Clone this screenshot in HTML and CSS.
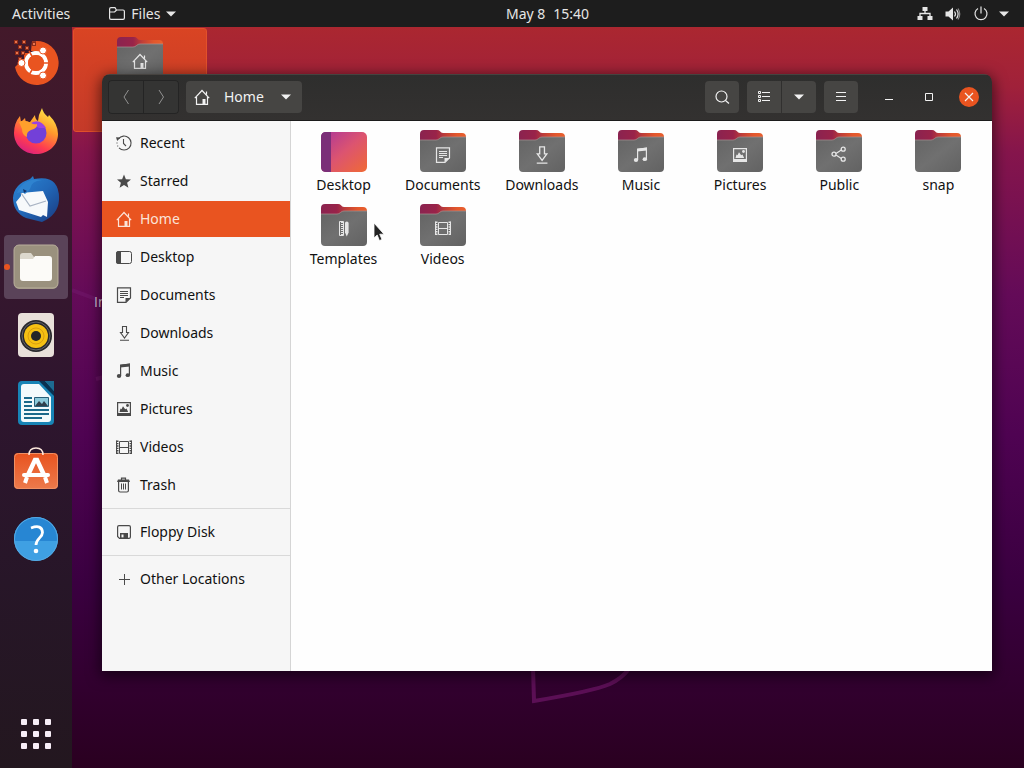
FILE: index.html
```html
<!DOCTYPE html>
<html lang="en">
  <head>
    <meta charset="UTF-8" />
    <meta name="viewport" content="width=device-width, initial-scale=1.0" />
    <title>Home</title>
    <link rel="stylesheet" href="styles.css">
  </head>
  <body>
    <svg class="sprite" width="0" height="0" aria-hidden="true">
      <defs>
        <linearGradient id="folder-back" x1="0" x2="1" y1="0" y2="0">
          <stop offset="0" stop-color="#8a2350" />
          <stop offset="0.35" stop-color="#992349" />
          <stop offset="0.55" stop-color="#c03f38" />
          <stop offset="0.8" stop-color="#e3572c" />
          <stop offset="1" stop-color="#e8602e" />
        </linearGradient>
        <linearGradient id="folder-front" x1="0" x2="1" y1="0" y2="1">
          <stop offset="0" stop-color="#646464" />
          <stop offset="0.5" stop-color="#707070" />
          <stop offset="1" stop-color="#626262" />
        </linearGradient>
        <linearGradient id="desk" x1="0" x2="1" y1="0" y2="1">
          <stop offset="0.1" stop-color="#b53c92" />
          <stop offset="0.5" stop-color="#dc5470" />
          <stop offset="1" stop-color="#f06a35" />
        </linearGradient>
        <linearGradient id="fox" x1="0.8" x2="0.3" y1="0" y2="1">
          <stop offset="0" stop-color="#fff04a" />
          <stop offset="0.4" stop-color="#ff9a2c" />
          <stop offset="0.75" stop-color="#ff3c50" />
          <stop offset="1" stop-color="#d82080" />
        </linearGradient>
        <linearGradient id="bird" x1="0" x2="1" y1="0" y2="1">
          <stop offset="0" stop-color="#2b86d4" />
          <stop offset="0.5" stop-color="#2268b8" />
          <stop offset="1" stop-color="#193a80" />
        </linearGradient>
        <linearGradient id="bag" x1="0" x2="0" y1="0" y2="1">
          <stop offset="0" stop-color="#e8531f" />
          <stop offset="1" stop-color="#ec7a4c" />
        </linearGradient>
      </defs>
      <symbol id="folder" viewBox="0 0 46 44">
        <path fill="url(#folder-back)" d="M0 5q0-4 4-4h13q2 0 3 1.200q1 1.800 3 1.800h19q4 0 4 4v12H0z" />
        <path fill="url(#folder-front)" d="M0 11h16q2 0 3.500-1.500t3.500-1.500h23v31q0 4-4 4H4q-4 0-4-4z" />
        <path fill="none" stroke="#a79492" stroke-width="0.700" d="M0 11h16q2 0 3.500-1.500t3.500-1.500h23" />
      </symbol>
      <symbol id="desktop-folder" viewBox="0 0 46 44">
        <rect y="3" width="46" height="40" rx="5" fill="url(#desk)" />
        <path fill="#7b2f78" d="M10 3H5Q0 3 0 8v30q0 5 5 5h5z" />
      </symbol>
      <symbol id="house" viewBox="0 0 16 16">
        <path fill="none" stroke="currentColor" stroke-width="1.200" d="M.8 9.200L8 1.500l7.200 7.700M2.500 8v7.400h11V8M12.500 5.500v-3" />
        <path fill="currentColor" d="M8.500 10h3v5.500h-3z" />
      </symbol>
      <symbol id="recent" viewBox="0 0 16 16">
        <path fill="none" stroke="currentColor" stroke-width="1.100" d="M2.500 3.800A7 7 0 1 1 3 12.900M7.500 4v4.500L10 11" />
        <path fill="currentColor" d="M0 2.200l4.500.3L1.200 6z" />
        <path fill="currentColor" d="M.5 7.500h1v1h-1zM1.200 10.500h1v1h-1z" />
      </symbol>
      <symbol id="star" viewBox="0 0 16 16">
        <path fill="currentColor" d="M8 1.500l1.900 4.700 5.100.4-3.900 3.200 1.300 5L8 12l-4.400 2.800 1.300-5L1 6.600l5.100-.4z" />
      </symbol>
      <symbol id="desktop" viewBox="0 0 16 16">
        <rect x="0.5" y="2.500" width="15" height="12" rx="2" fill="none" stroke="currentColor" />
        <path fill="currentColor" d="M5 2H2.500Q0 2 0 4.500v8Q0 15 2.500 15H5z" />
      </symbol>
      <symbol id="document" viewBox="0 0 16 16">
        <path fill="none" stroke="currentColor" stroke-width="1.200" d="M1.500.8h13v10l-4.500 4.500H1.500z" />
        <path fill="currentColor" d="M9.500 15.500V11H15z" />
        <path fill="none" stroke="currentColor" d="M4 4.500h8M4 6.500h8M4 8.500h8M4 10.500h4" />
      </symbol>
      <symbol id="download" viewBox="0 0 16 16">
        <path fill="none" stroke="currentColor" stroke-width="1.100" d="M6.500 1.500h4v6h2L8.500 13l-4-5.500h2zM4 15.300h9" />
      </symbol>
      <symbol id="music" viewBox="0 0 16 16">
        <path fill="none" stroke="currentColor" stroke-width="1.200" d="M4.600 13V2.200l8.800-1V12" />
        <path fill="currentColor" d="M4 1.800L14 .6v3L4 4.600z" />
        <ellipse cx="3" cy="13" rx="2.200" ry="1.900" fill="currentColor" />
        <ellipse cx="11.800" cy="12.200" rx="2.200" ry="1.900" fill="currentColor" />
      </symbol>
      <symbol id="picture" viewBox="0 0 16 16">
        <path fill="none" stroke="currentColor" stroke-width="1.200" d="M1.600 1.600h12.800v12.800H1.600z" />
        <path fill="currentColor" d="M1 12h14v3H1zM3.500 11l1-3.500 1 .8 1.500-3 2.200 3 1.300-.8 1.700 3.500z" />
        <circle cx="11.500" cy="4.500" r="1.400" fill="currentColor" />
      </symbol>
      <symbol id="film" viewBox="0 0 16 16">
        <path fill="none" stroke="currentColor" d="M3.500 2.500h9v12h-9zM3.500 8.500h9" />
        <path fill="none" stroke="currentColor" stroke-width="2" stroke-dasharray="1.400 1" d="M1.500 1.500V15M14.500 1.500V15" />
        <path fill="none" stroke="currentColor" d="M.5 1.500V15M15.500 1.500V15" />
      </symbol>
      <symbol id="trash" viewBox="0 0 16 16">
        <path fill="none" stroke="currentColor" stroke-width="1.200" d="M5.500 3V1.200h4V3M2.600 5v8.500q0 1.500 1.500 1.500h6.800q1.500 0 1.500-1.500V5" />
        <path fill="currentColor" d="M2 2.500h11l1 2.500H1z" />
        <path fill="none" stroke="currentColor" d="M5.500 6.500v6M7.500 6.500v6M9.500 6.500v6" />
      </symbol>
      <symbol id="floppy" viewBox="0 0 16 16">
        <path fill="none" stroke="currentColor" stroke-width="1.200" d="M3 1.600h10q1.400 0 1.400 1.400v10q0 1.400-1.400 1.400H3.500L1.600 12.500V3Q1.600 1.600 3 1.600z" />
        <path fill="currentColor" fill-rule="evenodd" d="M4 14.500V9h8v5.500zM5.500 10.500v3h2v-3z" />
      </symbol>
      <symbol id="plus" viewBox="0 0 16 16">
        <path fill="none" stroke="currentColor" d="M8.500 3v11M3 8.500h11" />
      </symbol>
      <symbol id="share" viewBox="0 0 16 16">
        <path fill="none" stroke="currentColor" stroke-width="1.200" d="M10.300 4L5 7.500M5 9l5.300 3.500" />
        <g fill="none" stroke="currentColor" stroke-width="1.300">
          <circle cx="3" cy="8.200" r="2" />
          <circle cx="12.200" cy="3.200" r="2" />
          <circle cx="12.200" cy="13.200" r="2" />
        </g>
      </symbol>
      <symbol id="template" viewBox="0 0 16 16">
        <path fill="none" stroke="currentColor" d="M3.500.5h4v14h-4z" />
        <path fill="none" stroke="currentColor" stroke-width="2" stroke-dasharray="1 1" d="M6 1v13" />
        <path fill="currentColor" d="M9 2q0-1.500 1.800-1.500T12.600 2v9.500l-1.800 4L9 11.500z" />
      </symbol>
      <symbol id="arrow" viewBox="0 0 10 6">
        <path fill="currentColor" d="M0 .5h10L5 5.500z" />
      </symbol>
    </svg>

    <header class="topbar">
      <div class="topbar-left">
        <button class="bar-button">Activities</button>
        <button class="bar-button app-menu">
          <svg class="icon" viewBox="0 0 16 16" aria-hidden="true">
            <path fill="none" stroke="currentColor" stroke-width="1.200" d="M.6 5V3q0-1.400 1.400-1.400h4L7.400 4H14q1.400 0 1.400 1.400V12q0 1.400-1.400 1.400H2Q.6 13.400.6 12zM.6 6h5l2-2" />
          </svg>
          Files
          <svg class="arrow" aria-hidden="true"><use href="#arrow" /></svg>
        </button>
      </div>
      <button class="bar-button clock"><span>May 8</span><span>15:40</span></button>
      <div class="topbar-right">
        <button class="bar-button status" aria-label="System">
          <svg class="icon" viewBox="0 0 16 16" aria-hidden="true">
            <path fill="currentColor" d="M5.500 1h5v4h-5zM.5 10h5v4h-5zM10.500 10h5v4h-5z" />
            <path fill="none" stroke="currentColor" stroke-width="1.300" d="M8 5v3M3 10V7.500h10V10" />
          </svg>
          <svg class="icon" viewBox="0 0 16 16" aria-hidden="true">
            <path fill="currentColor" d="M.5 5.500h3L8 1.500v13l-4.500-4h-3z" />
            <path fill="none" stroke="currentColor" stroke-width="1.200" d="M9.500 5.500q2 2.500 0 5M11.500 3.500q3.200 4.500 0 9" />
            <path fill="none" stroke="#8a8a8a" stroke-width="1.200" d="M13 2.500q3.500 5.500 0 11" />
          </svg>
          <svg class="icon" viewBox="0 0 16 16" aria-hidden="true">
            <path fill="none" stroke="currentColor" stroke-width="1.200" d="M5 2.500a6 6 0 1 0 6 0M8 .5v7" />
          </svg>
          <svg class="arrow" aria-hidden="true"><use href="#arrow" /></svg>
        </button>
      </div>
    </header>

    <div class="screen">
      <nav class="dock" aria-label="Dock">
        <button class="dock-item" aria-label="Install Ubuntu">
          <svg viewBox="0 0 48 48" aria-hidden="true">
            <path fill="#e95420" d="M24 2A22 22 0 1 1 3 28l3-3v-5h8v-5h8V9h2z" />
            <path fill="#e95420" d="M20 2.500h5V12h-6zM12 14h7v8h-7z" />
            <path fill="#8e2c18" d="M2 1h4v4H2zM10 1h4v4h-4zM20 3h4v4h-4zM6 6h4v4H6zM13 7h4v4h-4zM3 12h4v4H3zM9 12h4v4H9zM6 18h4v4H6z" />
            <path fill="#e8744e" d="M3 2h2v2H3zM11 2h2v2h-2zM21 4h2v2h-2zM7 7h2v2H7zM14 8h2v2h-2zM4 13h2v2H4zM10 13h2v2h-2zM7 19h2v2H7z" />
            <circle cx="24" cy="24" r="10" fill="none" stroke="#fff" stroke-width="4" />
            <path stroke="#e95420" stroke-width="1.500" d="M24 24l-7-12M24 24h14M24 24l-7 12" />
            <circle cx="24" cy="24" r="8" fill="#e95420" />
            <g fill="#fff" stroke="#e95420">
              <circle cx="9.500" cy="24" r="3.500" />
              <circle cx="31" cy="11.500" r="3.500" />
              <circle cx="31" cy="36.500" r="3.500" />
            </g>
          </svg>
        </button>
        <button class="dock-item" aria-label="Firefox">
          <svg viewBox="0 0 48 48" aria-hidden="true">
            <path fill="url(#fox)" d="M30 1q1 5 6 9l1-2q9 9 9 19c0 12-10 20-22 20S2 38 2 26Q2 16 8 9l1 6 4-4 1 5 4-1 5-7q0 4 3 6l1-6z" />
            <circle cx="24" cy="26" r="10.500" fill="#7340d8" />
            <path fill="#9b42e2" d="M19 16q9-5 15 5l-7 0z" />
            <path fill="#ff9f2c" d="M7 15q6-3 12 1 3 2 6 1 1 4-6 6-5 2-4 7-5-2-5-8z" />
          </svg>
        </button>
        <button class="dock-item" aria-label="Thunderbird">
          <svg viewBox="0 0 48 48" aria-hidden="true">
            <path fill="url(#bird)" d="M21 1l1 3q26-5 25 21-1 15-17 22L14 43Q1 37 1 23 2 9 18 4z" />
            <path fill="#f7f9fb" d="M9 18l22-2 5 11-1 15-4-2-2 2-22-7-3-8 5-6z" />
            <path fill="none" stroke="#a8b3c3" stroke-width="1.200" d="M9 18l9 13 16-5" />
            <path fill="#2f83cf" d="M5 18q7-16 25-13-11 1-12 9l-5 5-3-2z" />
            <path fill="#14356b" d="M11 14l4 2-3 2z" />
          </svg>
        </button>
        <button class="dock-item active" aria-label="Files">
          <svg viewBox="0 0 48 48" aria-hidden="true">
            <rect x="2" y="2" width="44" height="44" rx="5" fill="#9a917e" />
            <rect x="2" y="2" width="44" height="43" rx="5" fill="none" stroke="#b8ae9b" />
            <path fill="#dcd8cd" d="M8 13q0-3 3-3h8l3 4h5v10H8z" />
            <path fill="#fcfbf8" d="M8 16h13l2-3h14q3 0 3 3v19q0 3-3 3H11q-3 0-3-3z" />
          </svg>
        </button>
        <button class="dock-item" aria-label="Rhythmbox">
          <svg viewBox="0 0 48 48" aria-hidden="true">
            <rect x="6" y="2" width="36" height="44" rx="4" fill="#e8e0da" />
            <circle cx="24" cy="25" r="16" fill="#28282c" />
            <circle cx="24" cy="25" r="14" fill="none" stroke="#65656c" />
            <circle cx="24" cy="25" r="12" fill="#f5c013" />
            <circle cx="24" cy="25" r="8" fill="none" stroke="#d99e10" />
            <circle cx="24" cy="25" r="5" fill="#252528" />
          </svg>
        </button>
        <button class="dock-item" aria-label="LibreOffice Writer">
          <svg viewBox="0 0 48 48" aria-hidden="true">
            <rect x="6" y="2" width="36" height="44" rx="4" fill="#1884b6" />
            <path fill="#f3fafc" d="M12 5h15l12 13v22q0 3-3 3H12q-3 0-3-3V8q0-3 3-3z" />
            <path fill="#0b3050" d="M27 2l15 15V12L33 2z" />
            <path fill="#1d6b91" d="M33 2h9v10z" />
            <path stroke="#1b698b" stroke-width="2" d="M12 19h8M12 23h8M12 27h8M12 31h25M12 35h25M12 39h18" />
            <path fill="#8cc9da" stroke="#285f79" d="M22.500 18.500h14v9h-14z" />
            <path fill="#31404d" d="M23 27l4-5 3 3 2-3 4 5z" />
          </svg>
        </button>
        <button class="dock-item" aria-label="Ubuntu Software">
          <svg viewBox="0 0 48 48" aria-hidden="true">
            <rect x="2" y="6" width="44" height="36" rx="4" fill="url(#bag)" />
            <rect x="2.500" y="6.500" width="43" height="35" rx="4" fill="none" stroke="#ef9064" />
            <path fill="none" stroke="#fde8dc" stroke-width="1.500" d="M17 8q0-7 7-7t7 7" />
            <path fill="none" stroke="#fff" stroke-width="4.500" d="M16 28l7-15h2l7 15" />
            <rect x="10" y="26" width="28" height="4" rx="2" fill="#fff" />
            <path stroke="#fff" stroke-width="4" d="M15 30l-2 6M33 30l2 6" />
          </svg>
        </button>
        <button class="dock-item" aria-label="Help">
          <svg viewBox="0 0 48 48" aria-hidden="true">
            <circle cx="24" cy="24" r="22" fill="#3fa0e3" />
            <path fill="#2786d3" d="M2 24a22 22 0 0 1 44 0v2H2z" />
            <circle cx="24" cy="24" r="21.500" fill="none" stroke="#56a9e3" />
            <path fill="none" stroke="#fff" stroke-width="2.800" d="M19 13q11-4 11.500 4.500c0 5-6.500 6-6.500 12.500" />
            <circle cx="24" cy="36" r="2.300" fill="#fff" />
          </svg>
        </button>
        <button class="dock-item show-apps" aria-label="Show Applications">
          <svg viewBox="0 0 48 48" aria-hidden="true">
            <g fill="#f7eef7">
              <rect x="9" y="9" width="6" height="6" rx="1" /><rect x="21" y="9" width="6" height="6" rx="1" /><rect x="33" y="9" width="6" height="6" rx="1" />
              <rect x="9" y="21" width="6" height="6" rx="1" /><rect x="21" y="21" width="6" height="6" rx="1" /><rect x="33" y="21" width="6" height="6" rx="1" />
              <rect x="9" y="33" width="6" height="6" rx="1" /><rect x="21" y="33" width="6" height="6" rx="1" /><rect x="33" y="33" width="6" height="6" rx="1" />
            </g>
          </svg>
        </button>
      </nav>

      <main class="desktop">
        <svg class="wallpaper" viewBox="0 0 952 741" preserveAspectRatio="xMinYMin slice" aria-hidden="true">
          <path d="M0 263l24 9M461 640l1 34q60-10 76-17 12-6 18-14M24 352l8-2" />
        </svg>
        <div class="desk-icon">
          <svg class="folder" viewBox="0 0 46 44" aria-label="Home">
            <use href="#folder" width="46" height="44" />
            <use href="#house" x="15" y="17" width="16" height="16" />
          </svg>
        </div>
        <span class="desk-label">In</span>

        <section class="window">
          <header class="headerbar">
            <div class="linked">
              <button class="tool flat" aria-label="Back">
                <svg class="icon" viewBox="0 0 16 16"><path fill="none" stroke="currentColor" d="M10.500 1L6 8l4.500 7" /></svg>
              </button>
              <button class="tool flat" aria-label="Forward">
                <svg class="icon" viewBox="0 0 16 16"><path fill="none" stroke="currentColor" d="M6 1l4.500 7L6 15" /></svg>
              </button>
            </div>
            <button class="tool path">
              <svg class="icon" aria-hidden="true"><use href="#house" /></svg>
              <span>Home</span>
              <svg class="arrow" aria-hidden="true"><use href="#arrow" /></svg>
            </button>
            <div class="tools">
              <button class="tool" aria-label="Search">
                <svg class="icon" viewBox="0 0 16 16"><path fill="none" stroke="currentColor" stroke-width="1.200" d="M11.500 11.500L15 14.500" /><circle cx="7.500" cy="7.500" r="5.500" fill="none" stroke="currentColor" stroke-width="1.200" /></svg>
              </button>
              <div class="linked">
                <button class="tool" aria-label="List view">
                  <svg class="icon" viewBox="0 0 16 16"><path fill="none" stroke="currentColor" d="M6 3.500h8M6 7.500h8M6 11.500h8M2.500 2.500h2v2h-2zM2.500 6.500h2v2h-2zM2.500 10.500h2v2h-2z" /></svg>
                </button>
                <button class="tool" aria-label="View options">
                  <svg class="arrow" aria-hidden="true"><use href="#arrow" /></svg>
                </button>
              </div>
              <button class="tool" aria-label="Menu">
                <svg class="icon" viewBox="0 0 16 16"><path stroke="currentColor" d="M3 3.500h10M3 7.500h10M3 11.500h10" /></svg>
              </button>
            </div>
            <div class="controls">
              <button class="control" aria-label="Minimize">
                <svg class="icon" viewBox="0 0 16 16"><path stroke="currentColor" d="M4 10.500h8" /></svg>
              </button>
              <button class="control" aria-label="Maximize">
                <svg class="icon" viewBox="0 0 16 16"><path fill="none" stroke="currentColor" d="M4.500 4.500h7v7h-7z" /></svg>
              </button>
              <button class="control close" aria-label="Close">
                <svg class="icon" viewBox="0 0 16 16"><path stroke="currentColor" stroke-width="1.200" d="M4 4l8 8M12 4l-8 8" /></svg>
              </button>
            </div>
          </header>

          <div class="window-body">
            <nav class="sidebar" aria-label="Places">
              <a class="place" href="#"><svg class="icon"><use href="#recent" /></svg>Recent</a>
              <a class="place" href="#"><svg class="icon"><use href="#star" /></svg>Starred</a>
              <a class="place selected" href="#"><svg class="icon"><use href="#house" /></svg>Home</a>
              <a class="place" href="#"><svg class="icon"><use href="#desktop" /></svg>Desktop</a>
              <a class="place" href="#"><svg class="icon"><use href="#document" /></svg>Documents</a>
              <a class="place" href="#"><svg class="icon"><use href="#download" /></svg>Downloads</a>
              <a class="place" href="#"><svg class="icon"><use href="#music" /></svg>Music</a>
              <a class="place" href="#"><svg class="icon"><use href="#picture" /></svg>Pictures</a>
              <a class="place" href="#"><svg class="icon"><use href="#film" /></svg>Videos</a>
              <a class="place" href="#"><svg class="icon"><use href="#trash" /></svg>Trash</a>
              <hr />
              <a class="place" href="#"><svg class="icon"><use href="#floppy" /></svg>Floppy Disk</a>
              <hr />
              <a class="place" href="#"><svg class="icon"><use href="#plus" /></svg>Other Locations</a>
            </nav>

            <div class="files">
              <a class="file" href="#">
                <svg class="folder" viewBox="0 0 46 44"><use href="#desktop-folder" width="46" height="44" /></svg>
                Desktop
              </a>
              <a class="file" href="#">
                <svg class="folder" viewBox="0 0 46 44"><use href="#folder" width="46" height="44" /><use href="#document" x="15" y="18" width="16" height="16" /></svg>
                Documents
              </a>
              <a class="file" href="#">
                <svg class="folder" viewBox="0 0 46 44"><use href="#folder" width="46" height="44" /><use href="#download" x="13" y="16" width="19" height="19" /></svg>
                Downloads
              </a>
              <a class="file" href="#">
                <svg class="folder" viewBox="0 0 46 44"><use href="#folder" width="46" height="44" /><use href="#music" x="15" y="18" width="16" height="16" /></svg>
                Music
              </a>
              <a class="file" href="#">
                <svg class="folder" viewBox="0 0 46 44"><use href="#folder" width="46" height="44" /><use href="#picture" x="15" y="18" width="16" height="16" /></svg>
                Pictures
              </a>
              <a class="file" href="#">
                <svg class="folder" viewBox="0 0 46 44"><use href="#folder" width="46" height="44" /><use href="#share" x="15" y="17" width="16" height="16" /></svg>
                Public
              </a>
              <a class="file" href="#">
                <svg class="folder" viewBox="0 0 46 44"><use href="#folder" width="46" height="44" /></svg>
                snap
              </a>
              <a class="file" href="#">
                <svg class="folder" viewBox="0 0 46 44"><use href="#folder" width="46" height="44" /><use href="#template" x="15" y="18" width="16" height="16" /></svg>
                Templates
              </a>
              <a class="file" href="#">
                <svg class="folder" viewBox="0 0 46 44"><use href="#folder" width="46" height="44" /><use href="#film" x="15" y="17" width="16" height="16" /></svg>
                Videos
              </a>
            </div>
          </div>
        </section>

        <svg class="pointer" viewBox="0 0 12 20" aria-hidden="true">
          <path fill="#222" stroke="#fff" stroke-width="0.800" d="M1 1v15l3.200-3 2.200 5.500 2.600-1-2.300-5.300H11z" />
        </svg>
      </main>
    </div>
  </body>
</html>
```

FILE: styles.css
```css
* {
  box-sizing: border-box;
}
body {
  margin: 0;
  height: 100vh;
  display: flex;
  flex-direction: column;
  overflow: hidden;
  font-family: "Noto Sans", "Open Sans", sans-serif;
  font-size: 14px;
  line-height: 20px;
  background-color: #2c001e;
}
button {
  margin: 0;
  padding: 0;
  border: none;
  background: none;
  color: inherit;
  font: inherit;
}
a {
  color: inherit;
  text-decoration: none;
}
svg {
  display: block;
  flex: none;
}
.sprite {
  position: absolute;
}
.icon {
  width: 16px;
  height: 16px;
}
.arrow {
  width: 10px;
  height: 6px;
}

/* top bar */
.topbar {
  display: flex;
  flex: none;
  height: 27px;
  padding: 0 15px 0 12px;
  background-color: #1d1d1d;
  color: #e6e6e6;
}
.topbar-left,
.topbar-right {
  display: flex;
  flex: 1;
  gap: 39px;
}
.topbar-right {
  justify-content: flex-end;
}
.bar-button {
  display: flex;
  align-items: center;
}
.app-menu {
  gap: 6px;
}
.clock {
  gap: 8px;
  margin-left: 74px;
}
.status {
  gap: 12px;
}
.status .arrow {
  margin-left: -2px;
}

/* dock */
.screen {
  display: flex;
  flex: 1;
  min-height: 0;
  background: linear-gradient(
    #ab2730 0,
    #a0213a 8%,
    #85154c 17%,
    #640b58 36%,
    #4f0352 55%,
    #3a0040 75%,
    #320030 88%,
    #2a0020 100%
  );
}
.dock {
  display: flex;
  flex: none;
  flex-direction: column;
  align-items: center;
  gap: 4px;
  width: 72px;
  padding: 4px 0 2px;
  background: linear-gradient(#43192a, #3a182e 25%, #2e152e 50%, #271628 75%, #23171f);
}
.dock-item {
  position: relative;
  display: flex;
  align-items: center;
  justify-content: center;
  width: 64px;
  height: 64px;
  border-radius: 4px;
}
.dock-item svg {
  width: 48px;
  height: 48px;
}
.dock-item.active {
  background-color: #5a4359;
}
.dock-item.active::before {
  content: "";
  position: absolute;
  left: 0;
  top: 29px;
  width: 6px;
  height: 6px;
  border-radius: 50%;
  background-color: #e95420;
}
.show-apps {
  margin-top: auto;
}

/* desktop */
.desktop {
  position: relative;
  flex: 1;
}
.wallpaper {
  position: absolute;
  width: 100%;
  height: 100%;
}
.wallpaper path {
  fill: none;
  stroke: #6d1667;
  stroke-width: 4px;
  opacity: 0.7;
}
.desk-icon {
  position: absolute;
  left: 1px;
  top: 1px;
  display: flex;
  justify-content: center;
  width: 134px;
  height: 104px;
  padding-top: 7px;
  border: 1px solid #e2512a;
  border-radius: 3px;
  background: linear-gradient(#d94423, #c43a29);
}
.desk-label {
  position: absolute;
  left: 22px;
  top: 265px;
  color: #d9c9dc;
  font-family: "Open Sans", sans-serif;
}

/* window */
.window {
  position: absolute;
  left: 30px;
  right: 32px;
  top: 47px;
  bottom: 97px;
  display: flex;
  flex-direction: column;
  overflow: hidden;
  border-radius: 8px 8px 0 0;
  box-shadow: 0 3px 14px 2px rgba(0, 0, 0, 0.55);
}
.headerbar {
  display: flex;
  flex: none;
  align-items: center;
  gap: 7px;
  height: 47px;
  padding: 0 13px 1px 6px;
  border-top: 1px solid #464340;
  border-bottom: 1px solid #1c1c1c;
  background: linear-gradient(#2e2e2d, #333130);
  color: #f2f2f2;
}
.linked {
  display: flex;
  gap: 1px;
  border-radius: 4px;
  overflow: hidden;
}
.linked .tool {
  border-radius: 0;
}
.tool {
  display: flex;
  align-items: center;
  justify-content: center;
  width: 34px;
  height: 32px;
  border-radius: 4px;
  background-color: #464543;
}
.linked:has(.flat) {
  border: 1px solid #242424;
  background-color: #242424;
}
.tool.flat {
  background-color: #343433;
  color: #929292;
}
.tool.path {
  justify-content: flex-start;
  width: 116px;
  padding: 0 11px 0 8px;
  gap: 14px;
}
.path .arrow {
  margin-left: auto;
}
.tools {
  display: flex;
  gap: 8px;
  margin-left: auto;
}
.controls {
  display: flex;
  gap: 20px;
  margin-left: 14px;
}
.control {
  display: flex;
  align-items: center;
  justify-content: center;
  width: 20px;
  height: 20px;
  border-radius: 50%;
}
.control.close {
  background-color: #e95420;
}
.window-body {
  display: flex;
  flex: 1;
  min-height: 0;
}
.sidebar {
  display: flex;
  flex: none;
  flex-direction: column;
  gap: 2px;
  width: 189px;
  padding-top: 4px;
  border-right: 1px solid #d5d5d5;
  background-color: #f6f6f6;
  color: #111;
}
.sidebar hr {
  width: 100%;
  margin: 3px 0;
  border: none;
  border-top: 1px solid #d9d9d9;
}
.place {
  display: flex;
  align-items: center;
  gap: 8px;
  height: 36px;
  padding-left: 14px;
}
.place .icon {
  color: #4a4a4a;
}
.place.selected,
.place.selected .icon {
  color: #fbe3d8;
}
.place.selected {
  background-color: #e95420;
}
.files {
  flex: 1;
  display: grid;
  grid-template-columns: repeat(auto-fill, minmax(96px, 1fr));
  align-content: start;
  row-gap: 8px;
  padding: 8px 4px 8px 3px;
  background-color: #fefefe;
  color: #111;
}
.file {
  display: flex;
  flex-direction: column;
  align-items: center;
  gap: 2px;
}
.folder {
  width: 46px;
  height: 44px;
  color: #e6e6e6;
}
.pointer {
  position: absolute;
  left: 301px;
  top: 195px;
  width: 12px;
  height: 20px;
}
```
